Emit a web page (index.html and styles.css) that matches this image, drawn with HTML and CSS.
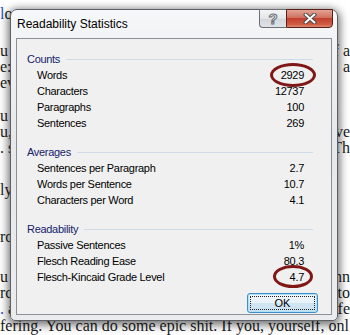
FILE: index.html
```html
<!DOCTYPE html>
<html lang="en">
<head>
    <meta charset="UTF-8">
    <title>Readability Statistics</title>
    <link rel="stylesheet" href="styles.css">
</head>
<body>
    <div class="doc">
        <div class="line first"><span class="l"><span class="link">l</span>o</span><span class="r"></span></div>
        <div class="line gap-a"><span class="l">u</span><span class="r">f a</span></div>
        <div class="line"><span class="l">e:</span><span class="r">a</span></div>
        <div class="line"><span class="l">ev</span><span class="r"></span></div>
        <div class="line gap-b"><span class="l">u</span><span class="r"></span></div>
        <div class="line"><span class="l">u,</span><span class="r">ve</span></div>
        <div class="line"><span class="l">. s</span><span class="r">Th</span></div>
        <div class="line gap-c"><span class="l">ly</span><span class="r"></span></div>
        <div class="line gap-d"><span class="l">ro</span><span class="r"></span></div>
        <div class="line gap-e"><span class="l">u</span><span class="r">nn</span></div>
        <div class="line"><span class="l">rc</span><span class="r">to</span></div>
        <div class="line"><span class="l"><span class="link">.</span> a</span><span class="r">fe</span></div>
        <div class="line full">fering. You can do some epic shit. If you, yourself, onl</div>
    </div>

    <div class="dialog">
        <div class="titlebar">
            <span class="title">Readability Statistics</span>
            <div class="caption-buttons">
                <div class="btn-help"><span>?</span></div>
                <div class="btn-close">
                    <svg width="14" height="11" viewBox="0 0 14 11">
                        <path d="M2.5 1.5 L11.5 9.5 M11.5 1.5 L2.5 9.5" stroke="#4a4a4a" stroke-width="4" stroke-linecap="round"/>
                        <path d="M2.5 1.5 L11.5 9.5 M11.5 1.5 L2.5 9.5" stroke="#ffffff" stroke-width="2" stroke-linecap="round"/>
                    </svg>
                </div>
            </div>
        </div>

        <div class="client">
            <div class="section">
                <div class="heading"><span>Counts</span><div class="rule"></div></div>
                <div class="row"><span>Words</span><span>2929</span></div>
                <div class="row"><span>Characters</span><span>12737</span></div>
                <div class="row"><span>Paragraphs</span><span>100</span></div>
                <div class="row"><span>Sentences</span><span>269</span></div>
            </div>
            <div class="section">
                <div class="heading"><span>Averages</span><div class="rule"></div></div>
                <div class="row"><span>Sentences per Paragraph</span><span>2.7</span></div>
                <div class="row"><span>Words per Sentence</span><span>10.7</span></div>
                <div class="row"><span>Characters per Word</span><span>4.1</span></div>
            </div>
            <div class="section">
                <div class="heading"><span>Readability</span><div class="rule"></div></div>
                <div class="row"><span>Passive Sentences</span><span>1%</span></div>
                <div class="row"><span>Flesch Reading Ease</span><span>80.3</span></div>
                <div class="row"><span>Flesch-Kincaid Grade Level</span><span>4.7</span></div>
            </div>
            <div class="actions">
                <button class="ok-button"><span>OK</span></button>
            </div>

            <div class="circle circle-words"></div>
            <div class="circle circle-grade"></div>
        </div>
    </div>
</body>
</html>
```

FILE: styles.css
```css
body {
    margin: 0;
    width: 350px;
    height: 335px;
    overflow: hidden;
    background: #ffffff;
    position: relative;
}

/* document behind the dialog */
.doc {
    font-family: "Liberation Serif", serif;
    font-size: 16px;
    color: #1b1b1b;
}

.line {
    display: flex;
    height: 16px;
    line-height: 16px;
    white-space: nowrap;
}

.line .r {
    margin-left: auto;
}

.line.first { margin-top: 6px; }
.line.gap-a { margin-top: 21px; }
.line.gap-b { margin-top: 17px; }
.line.gap-c { margin-top: 26px; }
.line.gap-d { margin-top: 31px; }
.line.gap-e { margin-top: 24px; }
.line.full { margin-top: 1px; }

.link {
    color: #1f4fbf;
}

/* dialog window */
.dialog {
    position: absolute;
    left: 10px;
    top: 9px;
    width: 326px;
    height: 310px;
    border: 1px solid #5c6066;
    border-radius: 7px 7px 5px 5px;
    background: linear-gradient(#f6f7f8, #e6e8eb 40%, #eaecee);
    box-shadow: 0 2px 9px 2px rgba(0, 0, 0, 0.55);
    display: flex;
    flex-direction: column;
    font-family: "Liberation Sans", Arial, sans-serif;
}

.titlebar {
    height: 28px;
    display: flex;
    align-items: center;
    padding-left: 6px;
}

.title {
    font-size: 12px;
    color: #000;
}

.caption-buttons {
    margin-left: auto;
    margin-right: 4px;
    align-self: flex-start;
    margin-top: -1px;
    display: flex;
}

.btn-help,
.btn-close {
    height: 19px;
    display: flex;
    align-items: center;
    justify-content: center;
    box-sizing: border-box;
}

.btn-help {
    width: 27px;
    border: 1px solid #6c7078;
    border-right: none;
    border-radius: 0 0 0 4px;
    background: linear-gradient(#f4f5f6, #e3e5e8 50%, #d3d7dc 51%, #dfe2e6);
}

.btn-help span {
    font-size: 15px;
    font-weight: bold;
    color: #fff;
    -webkit-text-stroke: 1px #6a6e74;
    line-height: 15px;
}

.btn-close {
    width: 47px;
    border: 1px solid #5a1f18;
    border-radius: 0 0 4px 0;
    background: linear-gradient(#e3a595, #d0705e 45%, #c2402e 50%, #cf5d45 85%, #e08a6e);
}

.client {
    flex: 1;
    margin: 0 5px 5px;
    border: 1px solid #8b9097;
    background: #f0f0f0;
    padding: 12px 27px 0 10px;
    position: relative;
    font-size: 11px;
    letter-spacing: -0.3px;
    color: #000;
}

.section + .section {
    margin-top: 13px;
}

.heading {
    display: flex;
    align-items: center;
    height: 16px;
    color: #15236b;
    margin-right: -9px;
}

.rule {
    flex: 1;
    height: 1px;
    margin-left: 6px;
    background: #cfdbe6;
}

.row {
    display: flex;
    justify-content: space-between;
    height: 16px;
    line-height: 16px;
    padding-left: 10px;
}

.actions {
    display: flex;
    justify-content: flex-end;
    margin-top: 8px;
    margin-right: -14px;
}

.ok-button {
    width: 71px;
    height: 20px;
    padding: 2px;
    border: 1px solid #3d8ec9;
    border-radius: 3px;
    background: linear-gradient(#f2f8fc, #e6f1f8 50%, #d1e6f3 51%, #c9e1f0);
    box-shadow: inset 0 0 0 1px #aee0f7;
    font-family: "Liberation Sans", Arial, sans-serif;
    font-size: 11px;
    color: #000;
    display: flex;
}

.ok-button span {
    flex: 1;
    border: 1px dotted #222;
    line-height: 12px;
}

.circle {
    position: absolute;
    border: 3px solid #7f1717;
    border-radius: 50%;
    box-sizing: border-box;
}

.circle-words {
    left: 253px;
    top: 24px;
    width: 46px;
    height: 24px;
}

.circle-grade {
    left: 256px;
    top: 226px;
    width: 40px;
    height: 23px;
}
```
